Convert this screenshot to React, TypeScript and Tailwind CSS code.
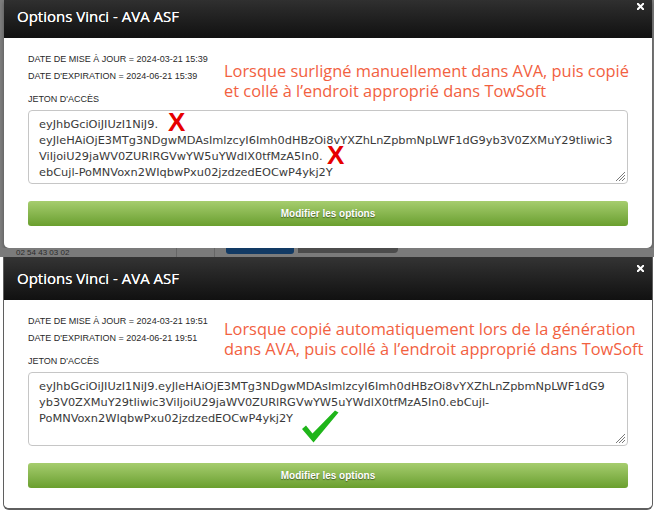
import React from "react";

type Props = {
  cropped?: boolean;
  updated: string;
  expires: string;
  note: [string, string];
  noteTop: string;
  lines: React.ReactNode[];
  marks?: React.ReactNode;
  pb: string;
};

function CloseIcon() {
  return (
    <svg width="7" height="7" viewBox="0 0 7 7" className="block">
      <path d="M0.8 0.8 L6.2 6.2 M6.2 0.8 L0.8 6.2" stroke="#fff" strokeWidth="2" strokeLinecap="square" />
    </svg>
  );
}

function Grip() {
  return (
    <svg width="11" height="11" viewBox="0 0 11 11" className="block">
      <path d="M10 1 L1 10 M10 4 L4 10 M10 7 L7 10" stroke="#7a7a7a" strokeWidth="1" />
    </svg>
  );
}

function Dialog({ cropped, updated, expires, note, noteTop, lines, marks, pb }: Props) {
  return (
    <div className="flex flex-col bg-white rounded-b-[5px] overflow-hidden">
      <div className={cropped ? "h-[38px] overflow-hidden" : "h-[43px] overflow-hidden"}>
        <div className={cropped ? "relative -mt-[5px] h-[43px] bg-gradient-to-b from-[#343434] to-[#111111] flex items-center" : "relative h-[43px] bg-gradient-to-b from-[#343434] to-[#111111] flex items-center"}>
          <div className="pl-[13px] text-white text-[15px] font-['Open_Sans',sans-serif] leading-none [text-shadow:0_0_0.3px_#fff]">
            Options Vinci - AVA ASF
          </div>
          <div className="absolute right-[8px] top-[8px]">
            <CloseIcon />
          </div>
        </div>
      </div>
      <div className={`px-[24px] pt-[15px] ${pb} flex flex-col`}>
        <div className="flex">
          <div className="w-[196px] shrink-0 flex flex-col text-[9px] leading-[12px] text-[#2a2a2a] font-['Liberation_Sans',Arial,sans-serif] whitespace-nowrap">
            <div>DATE DE MISE À JOUR = {updated}</div>
            <div className="mt-[5px]">DATE D'EXPIRATION = {expires}</div>
            <div className="mt-[11px]">JETON D'ACCÈS</div>
          </div>
          <div className={`${noteTop} shrink-0 text-[16.4px] leading-[20px] text-[#f2613f] font-['Open_Sans',sans-serif] whitespace-nowrap`}>
            <div>{note[0]}</div>
            <div>{note[1]}</div>
          </div>
        </div>
        <div className="relative mt-[5px] h-[74px] border border-[#c6c6c6] rounded-[4px] pl-[10px] pt-[5px] text-[11.35px] leading-[16px] text-[#3a3a3a] font-['DejaVu_Sans',Verdana,sans-serif] whitespace-nowrap">
          {lines.map((l, i) => (
            <div key={i}>{l}</div>
          ))}
          {marks}
          <div className="absolute right-[1px] bottom-[1px]">
            <Grip />
          </div>
        </div>
        <div className="mt-[17px] h-[25px] rounded-[3px] bg-gradient-to-b from-[#a6cd6e] to-[#6a9f2d] flex items-center justify-center text-white text-[10px] font-bold font-['Liberation_Sans',Arial,sans-serif] [text-shadow:0_1px_1px_rgba(0,0,0,0.45)]">
          Modifier les options
        </div>
      </div>
    </div>
  );
}

function RedX({ className }: { className: string }) {
  return (
    <span className={`absolute ${className} text-[26px] leading-[18px] font-bold text-[#e60000] font-['Liberation_Sans',Arial,sans-serif]`}>
      X
    </span>
  );
}

function Check() {
  return (
    <svg width="37" height="33" viewBox="0 0 37 33" className="absolute left-[273px] top-[37px]">
      <path d="M0 19 L4 15.5 L10.5 23.5 L33 0.5 L36.5 2.5 L11.5 32.5 Z" fill="#1fb51a" />
    </svg>
  );
}

function BackdropStrip() {
  return (
    <div className="h-[9px] bg-[#7b7b7b] flex items-start overflow-hidden">
      <div className="pl-[16px] w-[176px] text-[8px] leading-[9px] text-[#2b2b2b] font-['Liberation_Sans',Arial,sans-serif]">
        02 54 43 03 02
      </div>
      <div className="w-px h-[9px] bg-[#666]" />
      <div className="w-[37px]" />
      <div className="w-px h-[9px] bg-[#666]" />
      <div className="w-[11px]" />
      <div className="w-[68px] h-[6px] bg-[#123a64] rounded-b-[3px]" />
      <div className="w-[4px]" />
      <div className="w-[100px] h-[5px] bg-[#4c4c4c] rounded-br-[4px]" />
    </div>
  );
}

export default function App() {
  return (
    <div className="w-[654px] h-[525px] overflow-hidden bg-white flex flex-col">
      <div className="bg-[#7d7d7d] flex flex-col">
        <div className="ml-[4px] w-[648px] shadow-[0_2px_4px_rgba(0,0,0,0.35)] rounded-b-[5px]">
          <Dialog
            cropped
            updated="2024-03-21 15:39"
            expires="2024-06-21 15:39"
            note={["Lorsque surligné manuellement dans AVA, puis copié", "et collé à l’endroit approprié dans TowSoft"]}
            noteTop="mt-[8px]"
            pb="pb-[22px]"
            lines={[
              "eyJhbGciOiJIUzI1NiJ9.",
              "eyJleHAiOjE3MTg3NDgwMDAsImlzcyI6Imh0dHBzOi8vYXZhLnZpbmNpLWF1dG9yb3V0ZXMuY29tIiwic3",
              "ViIjoiU29jaWV0ZURlRGVwYW5uYWdlX0tfMzA5In0.",
              "ebCujl-PoMNVoxn2WIqbwPxu02jzdzedEOCwP4ykj2Y",
            ]}
            marks={
              <>
                <RedX className="left-[139px] top-[2px]" />
                <RedX className="left-[298px] top-[35px]" />
              </>
            }
          />
        </div>
        <BackdropStrip />
      </div>
      <div className="ml-[3px] w-[650px] border-x-[1px] border-b-[2px] border-[#5f5f5f] rounded-b-[6px] overflow-hidden">
        <Dialog
          updated="2024-03-21 19:51"
          expires="2024-06-21 19:51"
          note={["Lorsque copié automatiquement lors de la génération", "dans AVA, puis collé à l’endroit approprié dans TowSoft"]}
          noteTop="mt-[4px]"
          pb="pb-[20px]"
          lines={[
            "eyJhbGciOiJIUzI1NiJ9.eyJleHAiOjE3MTg3NDgwMDAsImlzcyI6Imh0dHBzOi8vYXZhLnZpbmNpLWF1dG9",
            "yb3V0ZXMuY29tIiwic3ViIjoiU29jaWV0ZURlRGVwYW5uYWdlX0tfMzA5In0.ebCujl-",
            "PoMNVoxn2WIqbwPxu02jzdzedEOCwP4ykj2Y",
          ]}
          marks={<Check />}
        />
      </div>
    </div>
  );
}
